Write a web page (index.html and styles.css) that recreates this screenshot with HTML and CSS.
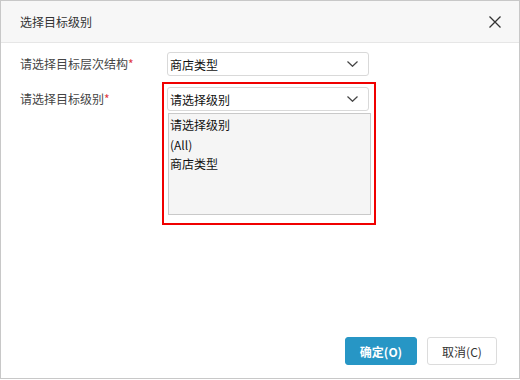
FILE: index.html
```html
<!DOCTYPE html>
<html>
<head>
<meta charset="utf-8">
<link rel="stylesheet" href="styles.css">
</head>
<body>
<div class="dialog">
  <div class="header">
    <span class="title">选择目标级别</span>
    <svg class="close" width="12" height="12" viewBox="0 0 12 12"><path d="M0.5 0.5 L11.5 11.5 M11.5 0.5 L0.5 11.5" stroke="#333" stroke-width="1.3" fill="none"/></svg>
  </div>
  <div class="body">
    <div class="row">
      <div class="label l1">请选择目标层次结构<span class="req">*</span></div>
      <div class="select"><span>商店类型</span><svg class="arrow" width="11" height="6" viewBox="0 0 11 6"><path d="M0.5 0.5 L5.5 5.3 L10.5 0.5" stroke="#444" stroke-width="1.2" fill="none"/></svg></div>
    </div>
    <div class="row row2">
      <div class="label l2">请选择目标级别<span class="req">*</span></div>
      <div class="highlight">
        <div class="select"><span>请选择级别</span><svg class="arrow" width="11" height="6" viewBox="0 0 11 6"><path d="M0.5 0.5 L5.5 5.3 L10.5 0.5" stroke="#444" stroke-width="1.2" fill="none"/></svg></div>
        <div class="listbox">
          <div class="opt">请选择级别</div>
          <div class="opt">(All)</div>
          <div class="opt">商店类型</div>
        </div>
      </div>
    </div>
  </div>
  <div class="footer">
    <button class="btn ok">确定(O)</button>
    <button class="btn cancel">取消(C)</button>
  </div>
</div>
</body>
</html>
```
FILE: styles.css
```css
* { box-sizing: border-box; }
body {
  margin: 0;
  background: #fff;
  font-family: "Noto Sans CJK SC", "Liberation Sans", sans-serif;
  font-size: 12px;
}
.dialog {
  width: 520px;
  height: 379px;
  border: 1px solid #c8c8c8;
  display: flex;
  flex-direction: column;
  background: #fff;
}
.header {
  height: 42px;
  background: #f7f7f7;
  border-bottom: 1px solid #e6e6e6;
  display: flex;
  align-items: center;
  justify-content: space-between;
  padding: 0 18px 0 19px;
  flex: none;
}
.title {
  color: #333;
  font-size: 12px;
}
.close { display: block; }
.body {
  padding: 9px 0 0 19px;
  flex: 1;
}
.row {
  display: flex;
  align-items: center;
}
.row2 {
  align-items: flex-start;
  margin-top: 6px;
}
.label {
  color: #444;
  line-height: 24px;
}
.l1 { width: 147px; }
.l2 { width: 142px; margin-top: 5px; }
.req { color: #e0393e; }
.select {
  width: 202px;
  height: 24px;
  border: 1px solid #d9d9d9;
  border-radius: 3px;
  background: #fff;
  display: flex;
  align-items: center;
  justify-content: space-between;
  padding: 0 10px 0 2px;
  color: #111;
}
.arrow { display: block; }
.highlight {
  width: 214px;
  height: 143px;
  border: 2px solid #f00000;
  padding: 3px 0 0 3px;
}
.listbox {
  width: 203px;
  height: 102px;
  margin: 2px 0 0 1px;
  background: #f5f5f5;
  border: 1px solid #c9c9c9;
  padding: 1px 0 0 1px;
  color: #111;
}
.opt {
  line-height: 19.5px;
}
.footer {
  display: flex;
  justify-content: flex-end;
  gap: 10px;
  padding: 0 22px 13px 0;
  flex: none;
}
.btn {
  height: 28px;
  border-radius: 3px;
  font-family: "Noto Sans CJK SC", "Liberation Sans", sans-serif;
  font-size: 12px;
  padding: 0;
}
.ok {
  width: 72px;
  background: #2796c5;
  border: 1px solid #2796c5;
  color: #fff;
  font-weight: bold;
}
.cancel {
  width: 70px;
  background: #fff;
  border: 1px solid #dcdcdc;
  color: #333;
}
```
